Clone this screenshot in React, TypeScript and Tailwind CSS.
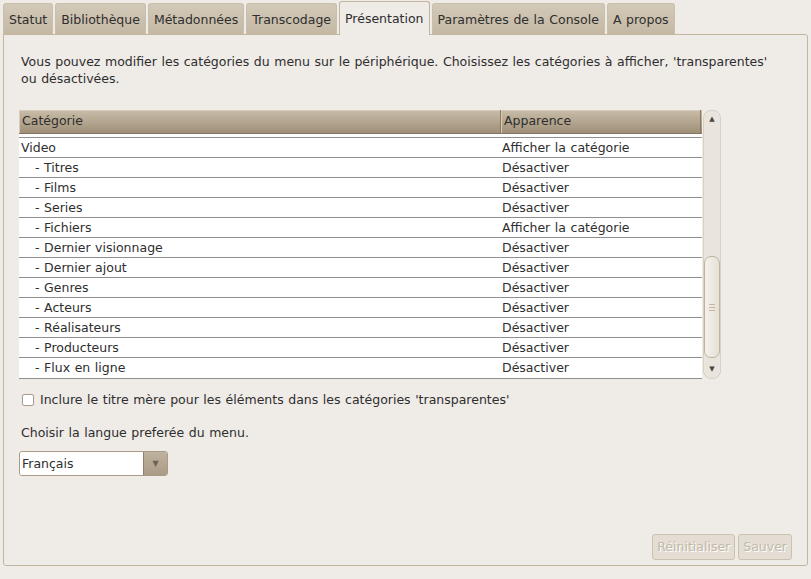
import React from "react";

const tabs = [
  "Statut",
  "Bibliothèque",
  "Métadonnées",
  "Transcodage",
  "Présentation",
  "Paramètres de la Console",
  "A propos",
];

const rows: [string, string, boolean][] = [
  ["Video", "Afficher la catégorie", false],
  ["- Titres", "Désactiver", true],
  ["- Films", "Désactiver", true],
  ["- Series", "Désactiver", true],
  ["- Fichiers", "Afficher la catégorie", true],
  ["- Dernier visionnage", "Désactiver", true],
  ["- Dernier ajout", "Désactiver", true],
  ["- Genres", "Désactiver", true],
  ["- Acteurs", "Désactiver", true],
  ["- Réalisateurs", "Désactiver", true],
  ["- Producteurs", "Désactiver", true],
  ["- Flux en ligne", "Désactiver", true],
];

export default function App() {
  const active = "Présentation";

  return (
    <div className="w-[811px] h-[579px] bg-[#efebe7] text-[12.5px] [word-spacing:0.6px] text-[#2e2e2e] font-['DejaVu_Sans',sans-serif] pt-px px-[3px] overflow-hidden">
      {/* Tab strip */}
      <div className="flex items-end h-[33px] gap-[2px] relative z-10">
        {tabs.map((t) =>
          t === active ? (
            <div
              key={t}
              className="h-[34px] -mb-px px-[5px] pt-[9px] bg-[#efebe7] border border-b-0 border-[#c2b6a1] rounded-t-[3px] leading-[16px]"
            >
              {t}
            </div>
          ) : (
            <div
              key={t}
              className="h-[31px] px-[5px] pt-[8px] bg-gradient-to-b from-[#d3c9b8] to-[#c4b8a3] border border-b-0 border-[#c9bfad] rounded-t-[3px] leading-[16px]"
            >
              {t}
            </div>
          )
        )}
      </div>

      {/* Panel */}
      <div className="h-[532px] border border-[#c2b6a1] rounded-b-[3px] rounded-tr-[3px] bg-[#efebe7] px-[15px] pt-[18px] flex flex-col">
        <p className="leading-[17px] pl-[2px] w-[762px]">
          Vous pouvez modifier les catégories du menu sur le périphérique. Choisissez les catégories à afficher, 'transparentes' ou désactivées.
        </p>

        {/* Tree view */}
        <div className="mt-[23px] flex w-[702px] h-[269px]">
          <div className="w-[684px] flex flex-col bg-white border-b border-[#8f8f8f]">
            <div className="flex h-[24px] bg-gradient-to-b from-[#c9bda9] via-[#b4a690] to-[#9f8f78] border-b border-[#857560] shrink-0">
              <div className="w-[482px] pl-[3px] leading-[22px] border-r border-[#8a7a63] shadow-[inset_1px_1px_0_#d7ccba]">
                Catégorie
              </div>
              <div className="w-[200px] pl-[3px] leading-[22px] border-r border-[#8a7a63] shadow-[inset_1px_1px_0_#d7ccba]">
                Apparence
              </div>
            </div>
            <div className="h-[3px] shrink-0 bg-white"></div>
            {rows.map(([name, value, child]) => (
              <div key={name} className="flex h-[20px] border-t border-[#8f8f8f] leading-[19px] shrink-0">
                <div className={`w-[482px] ${child ? "pl-[16px]" : "pl-[2px]"}`}>{name}</div>
                <div className="pl-[1px]">{value}</div>
              </div>
            ))}
          </div>

          {/* Scrollbar */}
          <div className="w-[18px] ml-[1px] bg-[#e9e4dd] border border-[#d8d0c4] rounded-[8px] flex flex-col items-center relative">
            <div className="text-[7px] text-[#4d4538] mt-[3px] leading-[10px]">▲</div>
            <div className="absolute left-[0px] top-[145px] w-[16px] h-[102px] bg-gradient-to-r from-[#f4f1ec] to-[#e6e0d6] border border-[#bfb39f] rounded-[7px] flex items-center justify-center">
              <div className="flex flex-col gap-[2px]">
                <div className="w-[6px] h-px bg-[#c4b9a7]"></div>
                <div className="w-[6px] h-px bg-[#c4b9a7]"></div>
                <div className="w-[6px] h-px bg-[#c4b9a7]"></div>
              </div>
            </div>
            <div className="mt-auto mb-[4px] text-[7px] text-[#4d4538] leading-[10px]">▼</div>
          </div>
        </div>

        {/* Checkbox */}
        <label className="mt-[12px] flex items-center gap-[6px] pl-[3px]">
          <span className="w-[12px] h-[12px] bg-white border border-[#a89d8c] rounded-[2px] inline-block"></span>
          <span className="leading-[17px]">Inclure le titre mère pour les éléments dans les catégories 'transparentes'</span>
        </label>

        <p className="mt-[16px] pl-[2px] leading-[17px]">Choisir la langue preferée du menu.</p>

        {/* Combo */}
        <div className="mt-[10px] flex w-[149px] h-[25px] border border-[#a89c88] rounded-[3px] overflow-hidden">
          <div className="flex-1 bg-white pl-[2px] leading-[23px]">Français</div>
          <div className="w-[24px] bg-gradient-to-b from-[#bfb29e] to-[#a99b85] border-l border-[#8e806b] flex items-center justify-center text-[8px] text-[#6e6353]">
            ▼
          </div>
        </div>

        {/* Buttons */}
        <div className="mt-auto mb-[5px] flex justify-end gap-[3px]">
          <button className="h-[26px] px-[4px] border border-[#cbc1b1] rounded-[3px] bg-[#e3ddd3] text-[#c2b8a8] [text-shadow:1px_1px_0_#ffffff]">
            Réinitialiser
          </button>
          <button className="h-[26px] px-[4px] border border-[#cbc1b1] rounded-[3px] bg-[#e3ddd3] text-[#c2b8a8] [text-shadow:1px_1px_0_#ffffff]">
            Sauver
          </button>
        </div>
      </div>
    </div>
  );
}
